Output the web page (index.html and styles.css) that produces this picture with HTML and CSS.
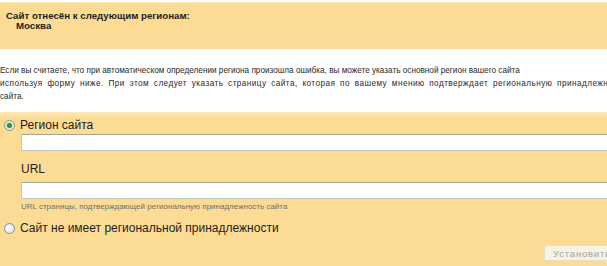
FILE: index.html
```html
<!DOCTYPE html>
<html lang="ru">
<head>
  <meta charset="UTF-8">
  <title>Регион сайта</title>
  <link rel="stylesheet" href="styles.css">
</head>
<body>

  <!-- Current regions -->
  <div class="region-box">
    <div class="region-title">Сайт отнесён к следующим регионам:</div>
    <div class="region-name">Москва</div>
  </div>

  <p class="note">
    Если вы считаете, что при автоматическом определении региона произошла ошибка, вы можете указать основной регион вашего сайта<br>
    <span class="note-wide">используя форму ниже. При этом следует указать страницу сайта, которая по вашему мнению подтверждает региональную принадлежность</span><br>
    сайта.
  </p>

  <!-- Region form -->
  <form class="region-form">
    <label class="radio-row">
      <input type="radio" name="mode" value="region" checked>
      <span>Регион сайта</span>
    </label>
    <input class="text-field first" type="text" name="region">

    <label class="field-label" for="url">URL</label>
    <input class="text-field" type="text" name="url" id="url">
    <div class="hint">URL страницы, подтверждающей региональную принадлежность сайта</div>

    <label class="radio-row second">
      <input type="radio" name="mode" value="none">
      <span>Сайт не имеет региональной принадлежности</span>
    </label>

    <div class="actions">
      <button class="btn" type="submit" disabled>Установить</button>
    </div>
  </form>

</body>
</html>
```

FILE: styles.css
```css
body {
  margin: 0;
  font-family: "Liberation Sans", Arial, sans-serif;
  color: #1e1e1e;
  background-color: #fff;
  overflow: hidden;
}
.region-box {
  margin-top: 2px;
  height: 47px;
  padding: 9px 6px 0;
  box-sizing: border-box;
  background: linear-gradient(#fde7b2, #fcdb94 3px);
  font-size: 9.7px;
  font-weight: bold;
  line-height: 10px;
}
.region-name {
  padding-left: 10px;
}
.note {
  margin: 15px 0 9px;
  width: 660px;
  font-size: 8.2px;
  line-height: 13px;
  color: #2a2a2a;
  white-space: nowrap;
}
.note-wide {
  word-spacing: 2px;
  letter-spacing: 0.45px;
}
.region-form {
  width: 630px;
  padding: 6px 0 5px;
  background: linear-gradient(#fdeabb, #fcdb94 6px);
}
.radio-row {
  display: flex;
  align-items: center;
  font-size: 12px;
  line-height: 14px;
}
.radio-row input {
  appearance: none;
  width: 11px;
  height: 11px;
  margin: 0 5px 0 4px;
  border: 1px solid #8c9090;
  border-radius: 50%;
  box-sizing: border-box;
  background: radial-gradient(circle at 40% 40%, #ffffff, #d8dcdc);
}
.radio-row input:checked {
  background: radial-gradient(circle, #3aa040 0, #2e8a34 2px, #cfe8cf 3px, #f4f6f4 5px);
}
.radio-row.second {
  margin-top: 9px;
}
.text-field {
  display: block;
  width: 620px;
  height: 17px;
  margin: 2px 0 0 21px;
  padding: 0 3px;
  box-sizing: border-box;
  border: 1px solid #c3cabb;
  border-top-color: #9fa898;
  background-color: #fffffd;
}
.field-label {
  display: block;
  margin: 11px 0 0 21px;
  font-size: 12px;
  line-height: 14px;
}
.field-label + .text-field {
  margin-top: 6px;
}
.hint {
  margin: 2px 0 0 21px;
  font-size: 8px;
  line-height: 11px;
  color: #707070;
}
.actions {
  display: flex;
  justify-content: flex-end;
  margin-top: 10px;
  padding-right: 6px;
}
.btn {
  width: 80px;
  height: 16px;
  padding: 0 0 0 8px;
  text-align: left;
  font-family: "Liberation Sans", Arial, sans-serif;
  font-size: 9.5px;
  letter-spacing: 0.8px;
  color: #a3a3a3;
  background-color: #f6f2e4;
  border: 1px solid #e6dfc8;
  border-radius: 2px;
}
```
